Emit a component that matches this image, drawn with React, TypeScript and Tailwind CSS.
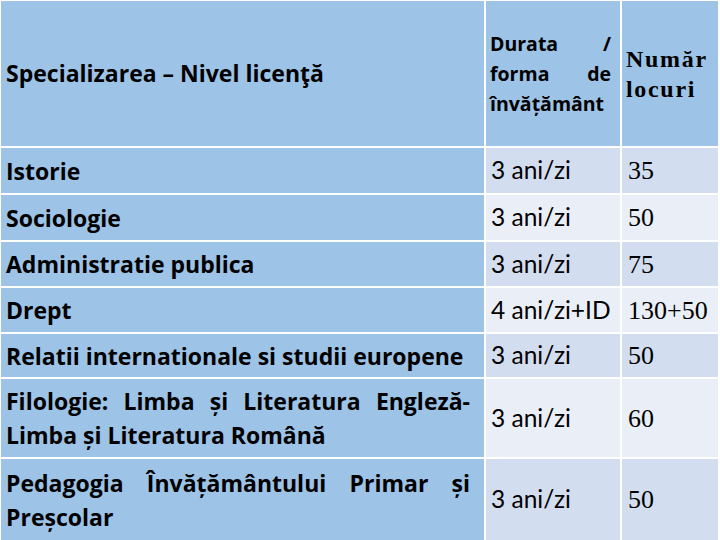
import React from "react";

type Row = { name: React.ReactNode; dur: string; n: string };

const Spread = ({ words }: { words: string[] }) => (
  <div className="flex justify-between w-full">
    {words.map((w, i) => (
      <span key={i}>{w}</span>
    ))}
  </div>
);

const rows: Row[] = [
  { name: "Istorie", dur: "3 ani/zi", n: "35" },
  { name: "Sociologie", dur: "3 ani/zi", n: "50" },
  { name: "Administratie publica", dur: "3 ani/zi", n: "75" },
  { name: "Drept", dur: "4 ani/zi+ID", n: "130+50" },
  { name: "Relatii internationale si studii europene", dur: "3 ani/zi", n: "50" },
  {
    name: (
      <div className="w-full">
        <Spread words={["Filologie:", "Limba", "și", "Literatura", "Engleză-"]} />
        <div>Limba și Literatura Română</div>
      </div>
    ),
    dur: "3 ani/zi",
    n: "60",
  },
  {
    name: (
      <div className="w-full">
        <Spread words={["Pedagogia", "Învățământului", "Primar", "și"]} />
        <div>Preșcolar</div>
      </div>
    ),
    dur: "3 ani/zi",
    n: "50",
  },
];

const sans = "font-['Open_Sans','Noto_Sans',sans-serif]";
const lato = "font-['Lato','Noto_Sans',sans-serif]";
const serif = "font-['Liberation_Serif','Times_New_Roman',serif]";

export default function App() {
  return (
    <div className="w-[720px] h-[540px] bg-white overflow-hidden pt-px pl-px text-black">
      <div className="grid grid-cols-[483px_134px_96px] grid-rows-[145px_45px_45px_44px_44px_43px_78px_81px] gap-[2px]">
        <div className={`bg-[#9DC3E6] flex items-center pl-[5px] ${sans} font-bold text-[23px]`}>
          Specializarea – Nivel licenţă
        </div>
        <div className={`bg-[#9DC3E6] flex items-center pl-[4px] pr-[9px] ${sans} font-bold text-[19.5px] leading-[30px]`}>
          <div className="w-full">
            <Spread words={["Durata", "/"]} />
            <Spread words={["forma", "de"]} />
            <div>învățământ</div>
          </div>
        </div>
        <div className={`bg-[#9DC3E6] flex items-center pl-[4px] ${serif} font-bold text-[24px] leading-[30px] tracking-[0.07em]`}>
          <div>
            Număr
            <br />
            locuri
          </div>
        </div>
        {rows.map((r, i) => {
          const light = i % 2 === 1 ? "bg-[#EAEFF7]" : "bg-[#D2DEEF]";
          return (
            <React.Fragment key={i}>
              <div className={`bg-[#9DC3E6] flex items-center pl-[5px] pr-[14px] ${sans} font-bold text-[23px] leading-[34px]`}>
                {r.name}
              </div>
              <div className={`${light} flex items-center pl-[5px] ${lato} text-[24.5px]`}>{r.dur}</div>
              <div className={`${light} flex items-center pl-[6px] ${serif} text-[26px]`}>{r.n}</div>
            </React.Fragment>
          );
        })}
      </div>
    </div>
  );
}
